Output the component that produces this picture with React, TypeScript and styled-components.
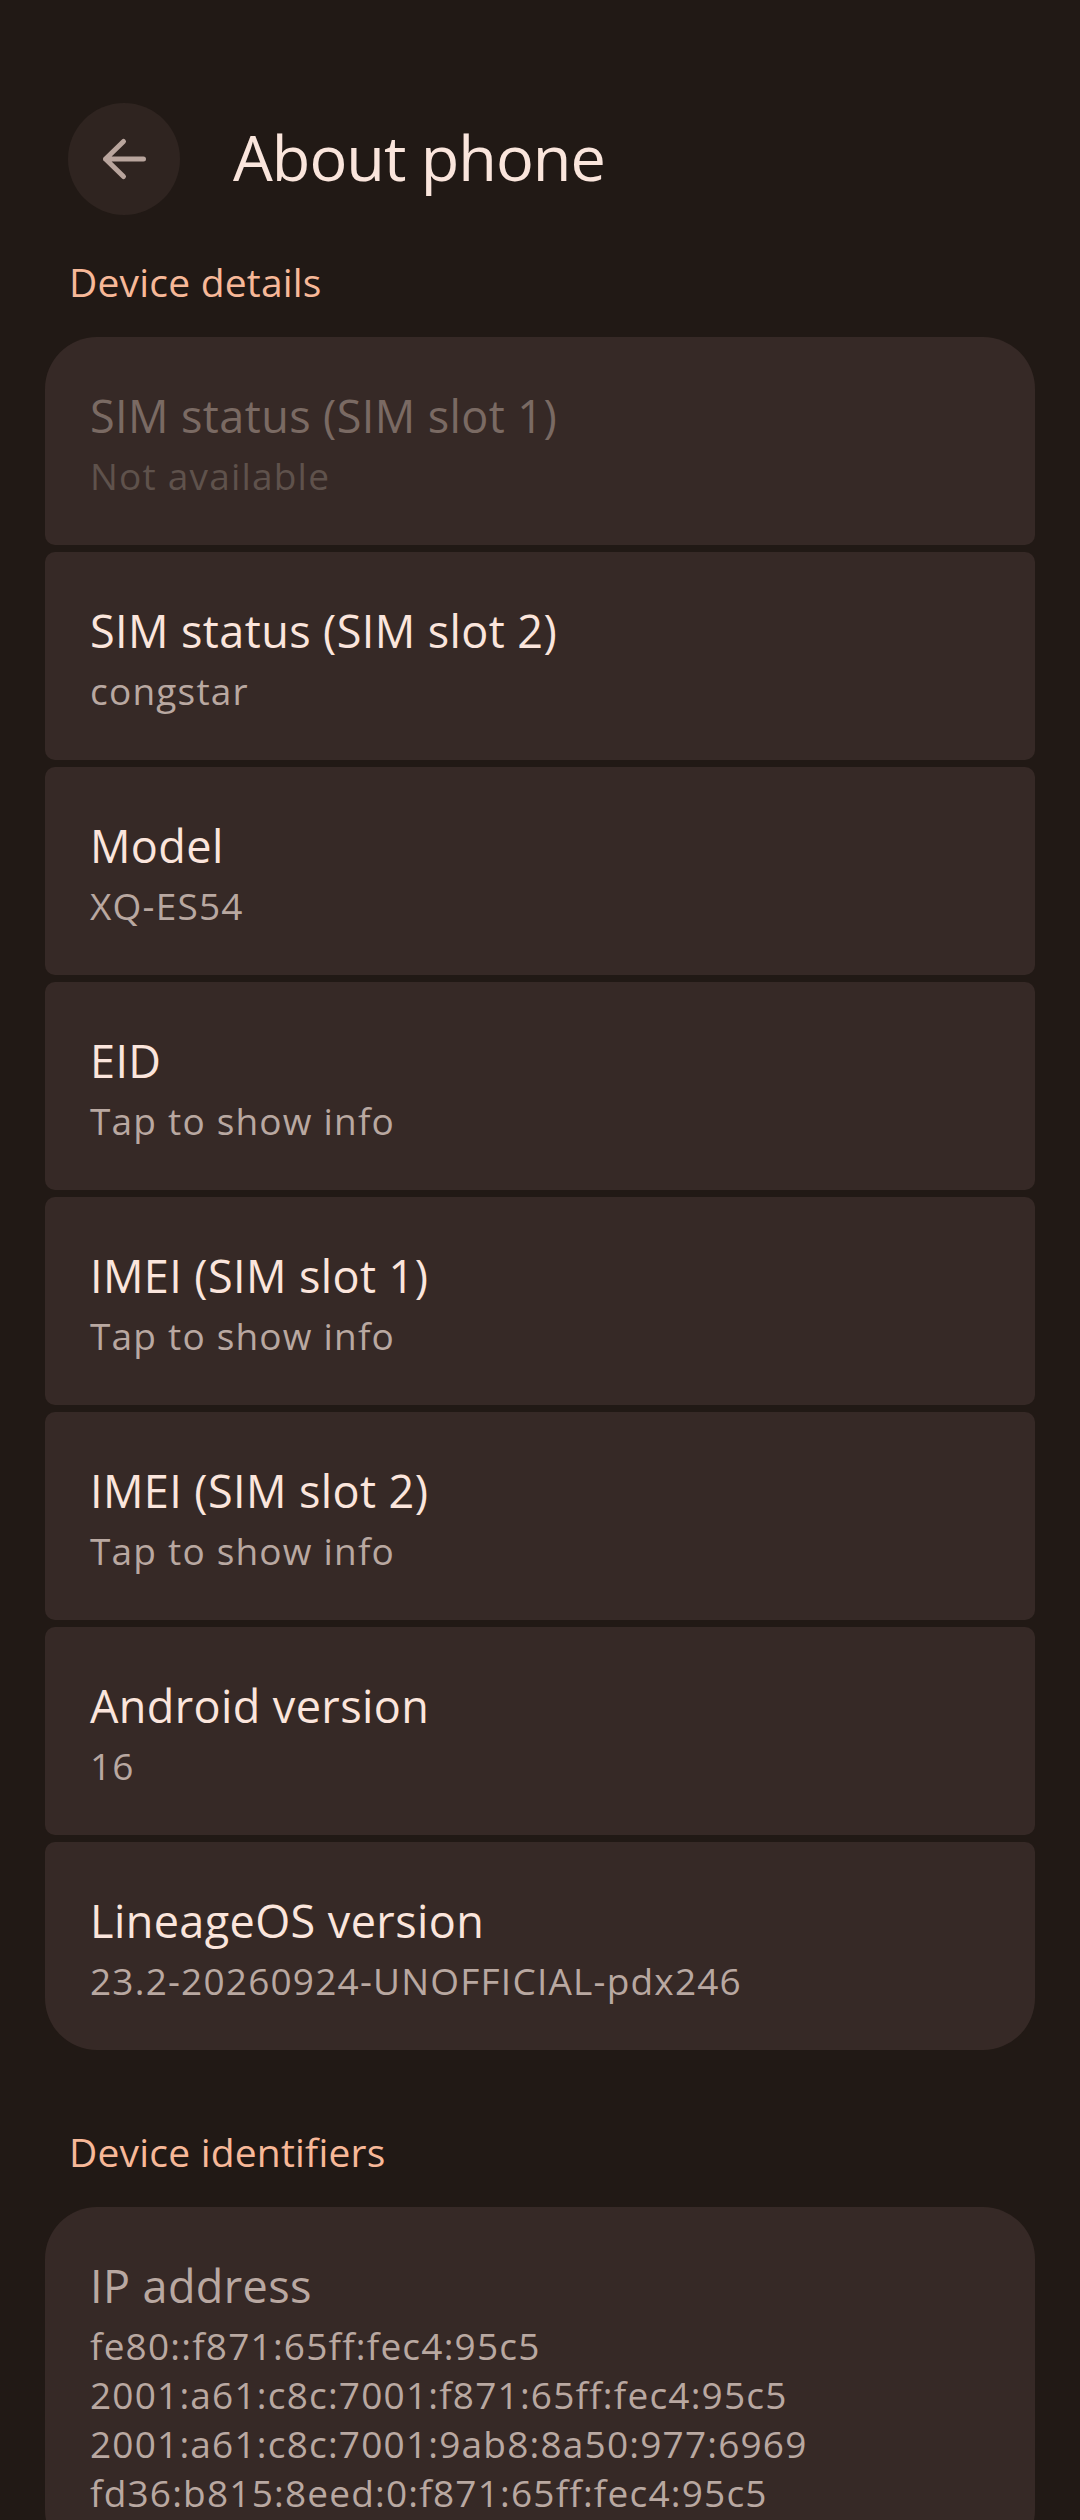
import React from "react";
import styled, { createGlobalStyle } from "styled-components";

const GlobalStyle = createGlobalStyle`
  html, body {
    margin: 0;
    padding: 0;
    background: #211915;
  }
  body {
    font-family: "Open Sans", "Noto Sans", sans-serif;
    -webkit-font-smoothing: antialiased;
  }
  * { box-sizing: border-box; }
`;

const Page = styled.div`
  width: 1080px;
  min-height: 2520px;
  background: #211915;
  padding: 0 45px 80px 45px;
`;

const Header = styled.header`
  display: flex;
  align-items: center;
  gap: 53px;
  padding: 103px 0 0 23px;
`;

const BackButton = styled.button`
  width: 112px;
  height: 112px;
  border-radius: 50%;
  border: none;
  padding: 0;
  background: #2f2420;
  display: flex;
  align-items: center;
  justify-content: center;
  flex-shrink: 0;
`;

const Title = styled.h1`
  margin: 0 0 6px 0;
  font-size: 63px;
  line-height: 63px;
  font-weight: 400;
  color: #fae5dc;
  letter-spacing: -1px;
`;

const SectionHeader = styled.h2<{ $top: number }>`
  margin: ${(p) => p.$top}px 0 29px 0;
  padding-left: 24px;
  font-size: 39px;
  line-height: 52px;
  font-weight: 400;
  color: #f7b898;
  letter-spacing: 0.2px;
`;

const Group = styled.section`
  display: flex;
  flex-direction: column;
  gap: 7px;
`;

const Item = styled.div`
  background: #362926;
  padding: 49px 44px 45px 45px;
  border-radius: 10px;
  &:first-child {
    border-top-left-radius: 52px;
    border-top-right-radius: 52px;
  }
  &:last-child {
    border-bottom-left-radius: 52px;
    border-bottom-right-radius: 52px;
  }
`;

const ItemTitle = styled.div<{ $tone: "normal" | "disabled" | "muted" }>`
  font-size: 45px;
  line-height: 60px;
  font-weight: 500;
  letter-spacing: 0.4px;
  color: ${(p) =>
    p.$tone === "disabled" ? "#7a6a63" : p.$tone === "muted" ? "#b9a8a1" : "#fbe5dc"};
`;

const ItemSummary = styled.div<{ $disabled?: boolean; $first?: boolean }>`
  margin-top: ${(p) => (p.$first ? 5 : 0)}px;
  font-size: 37px;
  line-height: 49px;
  font-weight: 400;
  letter-spacing: 1.2px;
  color: ${(p) => (p.$disabled ? "#5f524c" : "#b9a8a1")};
`;

type Row = { title: string; summary: string[]; tone?: "normal" | "disabled" | "muted" };

const details: Row[] = [
  { title: "SIM status (SIM slot 1)", summary: ["Not available"], tone: "disabled" },
  { title: "SIM status (SIM slot 2)", summary: ["congstar"] },
  { title: "Model", summary: ["XQ-ES54"] },
  { title: "EID", summary: ["Tap to show info"] },
  { title: "IMEI (SIM slot 1)", summary: ["Tap to show info"] },
  { title: "IMEI (SIM slot 2)", summary: ["Tap to show info"] },
  { title: "Android version", summary: ["16"] },
  { title: "LineageOS version", summary: ["23.2-20260924-UNOFFICIAL-pdx246"] },
];

const identifiers: Row[] = [
  {
    title: "IP address",
    summary: [
      "fe80::f871:65ff:fec4:95c5",
      "2001:a61:c8c:7001:f871:65ff:fec4:95c5",
      "2001:a61:c8c:7001:9ab8:8a50:977:6969",
      "fd36:b815:8eed:0:f871:65ff:fec4:95c5",
    ],
    tone: "muted",
  },
];

const BackArrow = () => (
  <svg width="112" height="112" viewBox="0 0 112 112" fill="none">
    <path
      d="M75.5 56H37.5M55.5 38.5L37.5 56L55.5 73.5"
      stroke="#b9a59d"
      strokeWidth="5"
      strokeLinecap="round"
      strokeLinejoin="round"
    />
  </svg>
);

const RowList = ({ rows }: { rows: Row[] }) => (
  <Group>
    {rows.map((r) => (
      <Item key={r.title}>
        <ItemTitle $tone={r.tone ?? "normal"}>{r.title}</ItemTitle>
        {r.summary.map((s, i) => (
          <ItemSummary key={i} $first={i === 0} $disabled={r.tone === "disabled"}>
            {s}
          </ItemSummary>
        ))}
      </Item>
    ))}
  </Group>
);

export default function App() {
  return (
    <>
      <GlobalStyle />
      <Page>
        <Header>
          <BackButton aria-label="Back">
            <BackArrow />
          </BackButton>
          <Title>About phone</Title>
        </Header>
        <SectionHeader $top={41}>Device details</SectionHeader>
        <RowList rows={details} />
        <SectionHeader $top={76}>Device identifiers</SectionHeader>
        <RowList rows={identifiers} />
      </Page>
    </>
  );
}
